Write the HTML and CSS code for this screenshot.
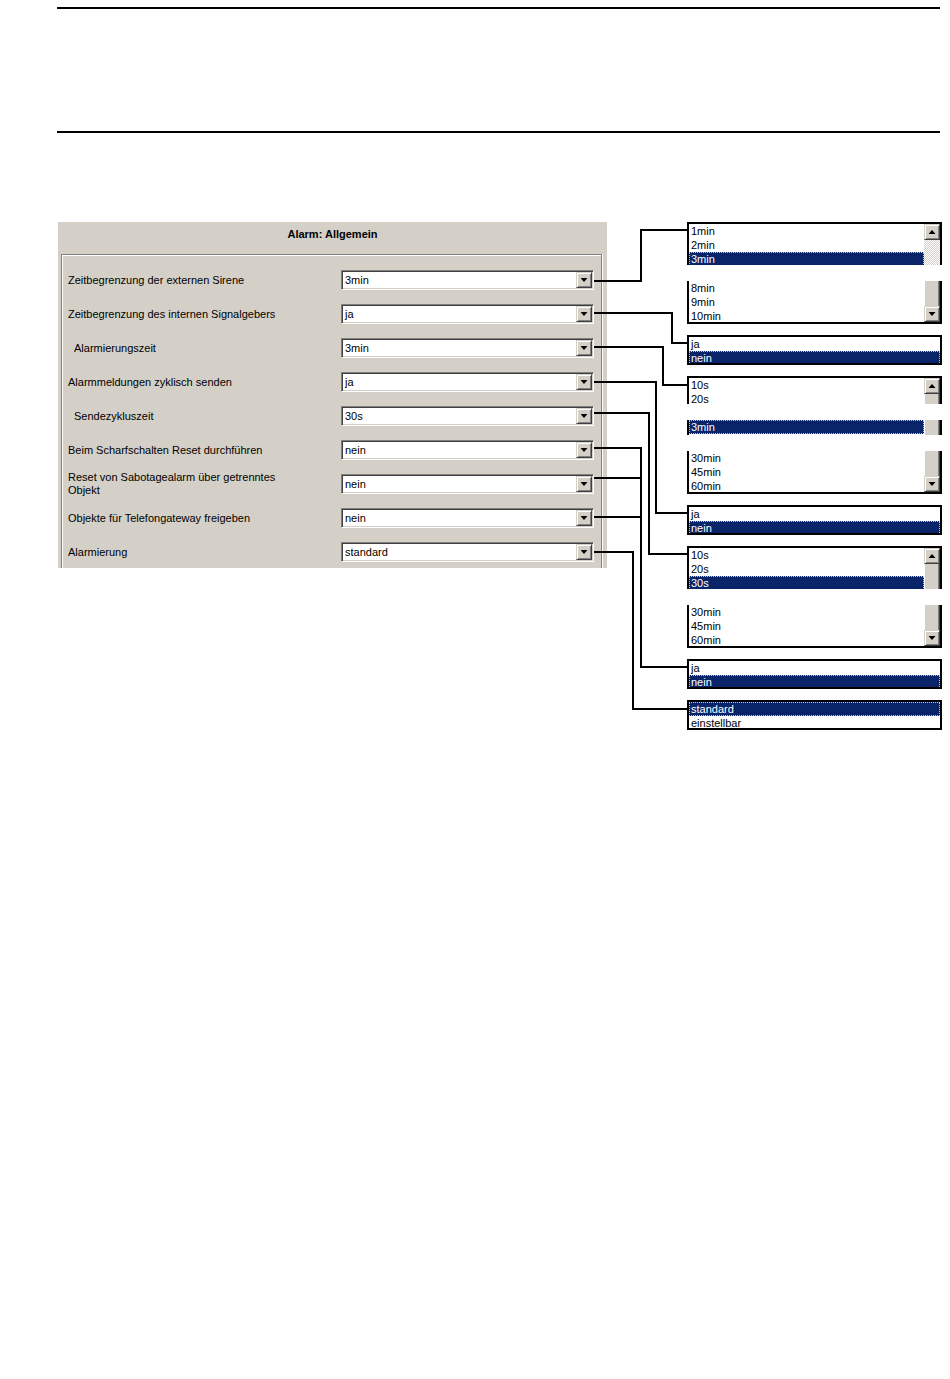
FILE: index.html
```html
<!DOCTYPE html>
<html lang="de">
<head>
  <meta charset="UTF-8" />
  <meta name="viewport" content="width=device-width, initial-scale=1.0" />
  <title>Alarm: Allgemein</title>
  <link rel="stylesheet" href="styles.css">
</head>
<body>
  <div class="page-head"></div>

  <div class="figure">
    <div class="dialog">
      <div class="dialog-title">Alarm: Allgemein</div>
      <div class="group">
        <div class="row">
          <span class="label">Zeitbegrenzung der externen Sirene</span>
          <div class="combo"><span class="value">3min</span><span class="drop"></span></div>
        </div>
        <div class="row">
          <span class="label">Zeitbegrenzung des internen Signalgebers</span>
          <div class="combo"><span class="value">ja</span><span class="drop"></span></div>
        </div>
        <div class="row">
          <span class="label sub">Alarmierungszeit</span>
          <div class="combo"><span class="value">3min</span><span class="drop"></span></div>
        </div>
        <div class="row">
          <span class="label">Alarmmeldungen zyklisch senden</span>
          <div class="combo"><span class="value">ja</span><span class="drop"></span></div>
        </div>
        <div class="row">
          <span class="label sub">Sendezykluszeit</span>
          <div class="combo"><span class="value">30s</span><span class="drop"></span></div>
        </div>
        <div class="row">
          <span class="label">Beim Scharfschalten Reset durchführen</span>
          <div class="combo"><span class="value">nein</span><span class="drop"></span></div>
        </div>
        <div class="row">
          <span class="label">Reset von Sabotagealarm über getrenntes<br>Objekt</span>
          <div class="combo"><span class="value">nein</span><span class="drop"></span></div>
        </div>
        <div class="row">
          <span class="label">Objekte für Telefongateway freigeben</span>
          <div class="combo"><span class="value">nein</span><span class="drop"></span></div>
        </div>
        <div class="row">
          <span class="label">Alarmierung</span>
          <div class="combo"><span class="value">standard</span><span class="drop"></span></div>
        </div>
      </div>
    </div>

    <div class="lists">
      <!-- Zeitbegrenzung externe Sirene -->
      <div class="lb cut-a">
        <div class="opts">
          <div class="opt">1min</div>
          <div class="opt">2min</div>
          <div class="opt sel">3min</div>
        </div>
        <div class="sb"><span class="sb-btn up"></span><span class="sb-track"></span></div>
      </div>
      <div class="lb cut-b">
        <div class="opts">
          <div class="opt">8min</div>
          <div class="opt">9min</div>
          <div class="opt">10min</div>
        </div>
        <div class="sb"><span class="sb-thumb"></span><span class="sb-btn down"></span></div>
      </div>

      <div class="lb pair">
        <div class="opt">ja</div>
        <div class="opt sel">nein</div>
      </div>

      <!-- Alarmierungszeit -->
      <div class="lb cut-s">
        <div class="opts">
          <div class="opt">10s</div>
          <div class="opt">20s</div>
        </div>
        <div class="sb"><span class="sb-btn up"></span><span class="sb-thumb"></span></div>
      </div>
      <div class="lb cut-m">
        <div class="opts">
          <div class="opt sel">3min</div>
        </div>
        <div class="sb"><span class="sb-thumb"></span></div>
      </div>
      <div class="lb cut-b">
        <div class="opts">
          <div class="opt">30min</div>
          <div class="opt">45min</div>
          <div class="opt">60min</div>
        </div>
        <div class="sb"><span class="sb-thumb"></span><span class="sb-btn down"></span></div>
      </div>

      <div class="lb pair">
        <div class="opt">ja</div>
        <div class="opt sel">nein</div>
      </div>

      <!-- Sendezykluszeit -->
      <div class="lb cut-a">
        <div class="opts">
          <div class="opt">10s</div>
          <div class="opt">20s</div>
          <div class="opt sel">30s</div>
        </div>
        <div class="sb"><span class="sb-btn up"></span><span class="sb-thumb"></span></div>
      </div>
      <div class="lb cut-b">
        <div class="opts">
          <div class="opt">30min</div>
          <div class="opt">45min</div>
          <div class="opt">60min</div>
        </div>
        <div class="sb"><span class="sb-thumb"></span><span class="sb-btn down"></span></div>
      </div>

      <div class="lb pair">
        <div class="opt">ja</div>
        <div class="opt sel">nein</div>
      </div>

      <div class="lb pair">
        <div class="opt sel">standard</div>
        <div class="opt">einstellbar</div>
      </div>
    </div>

    <svg class="wires" width="950" height="520" viewBox="0 0 950 520">
      <polyline points="594,59 641,59 641,8 687,8" />
      <polyline points="594,91 672,91 672,121 687,121" />
      <polyline points="594,125 663,125 663,163 687,163" />
      <polyline points="594,160 656,160 656,291 687,291" />
      <polyline points="594,191 649,191 649,332 687,332" />
      <polyline points="594,226 641,226 641,445 687,445" />
      <polyline points="594,256 641,256" />
      <polyline points="594,295 641,295" />
      <polyline points="594,330 633,330 633,487 687,487" />
    </svg>
  </div>
</body>
</html>
```

FILE: styles.css
```css
body {
  margin: 0;
  background: #fff;
  font-family: "Liberation Sans", Arial, sans-serif;
  font-size: 11px;
  color: #000;
}

.page-head {
  margin: 7px 10px 0 57px;
  height: 122px;
  border-top: 2px solid #000;
  border-bottom: 2px solid #000;
}

.figure {
  position: relative;
  display: flex;
  align-items: flex-start;
  margin-top: 89px;
  padding-left: 58px;
}

/* dialog */
.dialog {
  width: 549px;
  height: 346px;
  background: #d4d0c8;
  overflow: hidden;
}
.dialog-title {
  height: 32px;
  line-height: 24px;
  text-align: center;
  font-weight: bold;
}
.group {
  margin: 0 5px 0 3px;
  height: 320px;
  padding: 15px 0 0 6px;
  border: 1px solid #808080;
  border-bottom: 0;
  box-shadow: inset 1px 1px 0 #fff, 1px 0 0 #fff;
  display: flex;
  flex-direction: column;
  gap: 14px;
}
.row {
  display: flex;
  align-items: center;
  height: 20px;
}
.label {
  width: 273px;
  line-height: 13px;
}
.label.sub {
  padding-left: 6px;
  width: 267px;
}
.combo {
  box-sizing: border-box;
  width: 253px;
  height: 20px;
  display: flex;
  align-items: center;
  background: #fff;
  border: 1px solid;
  border-color: #808080 #fff #fff #808080;
  box-shadow: inset 1px 1px 0 #404040, inset -1px -1px 0 #d4d0c8;
}
.combo .value {
  flex: 1;
  padding-left: 3px;
}
.drop {
  width: 16px;
  height: 16px;
  margin-right: 1px;
}

/* raised buttons (combo + scrollbar) */
.drop, .sb-btn {
  box-sizing: border-box;
  display: flex;
  align-items: center;
  justify-content: center;
  background: #d4d0c8;
  border: 1px solid;
  border-color: #d4d0c8 #404040 #404040 #d4d0c8;
  box-shadow: inset 1px 1px 0 #fff, inset -1px -1px 0 #808080;
}
.drop::after, .sb-btn::after {
  content: "";
  width: 7px;
  height: 4px;
  background: #000;
  clip-path: polygon(0 0, 100% 0, 50% 100%);
}
.sb-btn.up::after {
  clip-path: polygon(50% 0, 100% 100%, 0 100%);
}

/* list boxes on the right */
.lists {
  margin-left: 80px;
  width: 255px;
}
.lb {
  box-sizing: border-box;
  height: 30px;
  border: 2px solid #000;
  background: #fff;
  overflow: hidden;
  display: grid;
  grid-template-columns: 1fr 16px;
}
.lb + .lb {
  margin-top: 11px;
}
.lb.pair {
  display: block;
}
.lb.cut-a {
  height: 43px;
  border-bottom: 0;
}
.lb.cut-s {
  height: 28px;
  border-bottom: 0;
}
.lb.cut-m {
  height: 15px;
  border-top: 0;
  border-bottom: 0;
}
.lb.cut-b {
  height: 43px;
  border-top: 0;
}
.lb.cut-b, .lb.cut-m {
  margin-top: 16px;
}
.opts {
  overflow: hidden;
}
.opt {
  height: 14px;
  line-height: 14px;
  padding-left: 2px;
  white-space: nowrap;
}
.opt.sel {
  background: #0a246a;
  color: #fff;
  outline: 1px dotted #e8c870;
  outline-offset: -1px;
}

.sb {
  display: flex;
  flex-direction: column;
}
.sb-btn {
  flex: none;
  width: 16px;
  height: 16px;
}
.sb-track {
  flex: 1;
  background: repeating-conic-gradient(#d4d0c8 0 25%, #fff 0 50%) 0 0 / 2px 2px;
}
.sb-thumb {
  flex: 1;
  background: #d4d0c8;
  box-shadow: inset 1px 0 0 #fff, inset -1px 0 0 #404040, inset -2px 0 0 #808080;
}

/* connector lines between the dialog and the lists */
.wires {
  position: absolute;
  top: 0;
  left: 0;
  pointer-events: none;
  fill: none;
  stroke: #000;
  stroke-width: 2;
  shape-rendering: crispEdges;
}
```
